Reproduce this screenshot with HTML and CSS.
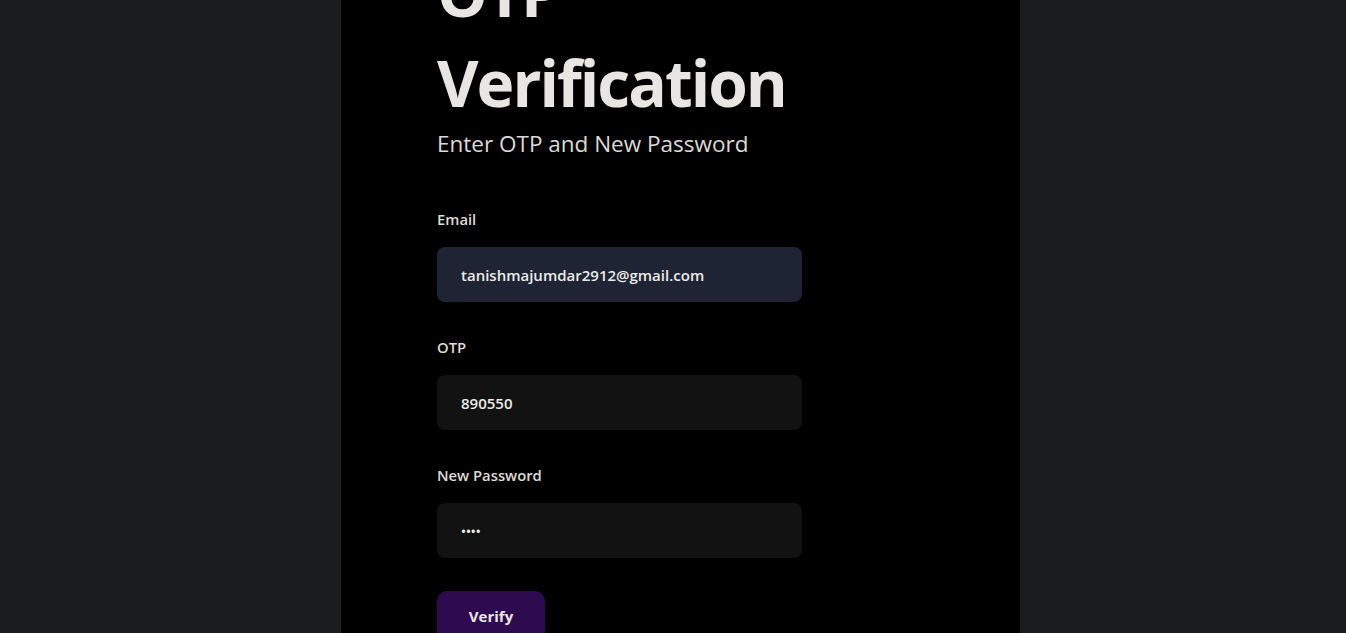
FILE: index.html
```html
<!DOCTYPE html>
<html lang="en">
<head>
<meta charset="utf-8">
<title>OTP Verification</title>
<link rel="stylesheet" href="styles.css">
</head>
<body>
<div class="page">
  <main class="panel">
    <h1 class="title">OTP Verification</h1>
    <p class="subtitle">Enter OTP and New Password</p>
    <form class="form">
      <div class="field">
        <label class="label" for="email">Email</label>
        <input class="input input-email" id="email" type="email" value="tanishmajumdar2912@gmail.com">
      </div>
      <div class="field">
        <label class="label" for="otp">OTP</label>
        <input class="input" id="otp" type="text" value="890550">
      </div>
      <div class="field">
        <label class="label" for="pw">New Password</label>
        <input class="input input-pw" id="pw" type="password" value="abcd">
      </div>
      <button class="btn" type="button">Verify</button>
    </form>
  </main>
</div>
</body>
</html>
```
FILE: styles.css
```css
html, body {
  margin: 0;
  padding: 0;
  height: 100%;
  overflow: hidden;
}
body {
  background: #1b1c1e;
  font-family: "Open Sans", "Noto Sans", sans-serif;
  color: #e8e6e3;
}
.page {
  display: flex;
  min-height: 633px;
}
.panel {
  margin-left: 341px;
  width: 679px;
  box-sizing: border-box;
  background: #000;
  padding: 0 96px 40px;
  min-height: 633px;
}
.title {
  margin: -52px 0 0;
  max-width: 380px;
  font-size: 64px;
  line-height: 90px;
  font-weight: 700;
  letter-spacing: -2px;
  color: #e8e6e3;
}
.subtitle {
  margin: 0;
  font-size: 22.5px;
  line-height: 32px;
  color: #dcdad6;
}
.form {
  display: flex;
  flex-direction: column;
  align-items: flex-start;
  gap: 35px;
  margin-top: 49px;
}
.field {
  display: flex;
  flex-direction: column;
  width: 365px;
}
.label {
  font-size: 14.8px;
  line-height: 20px;
  font-weight: 600;
  color: #dedbd7;
  margin-bottom: 18px;
}
.input {
  box-sizing: border-box;
  width: 365px;
  height: 55px;
  border: none;
  outline: none;
  border-radius: 8px;
  background: #121212;
  color: #ecebe8;
  font-family: inherit;
  font-size: 15px;
  font-weight: 600;
  padding: 0 24px;
}
.input-email {
  background: #1e2433;
}
.input-pw {
  font-size: 13px;
  letter-spacing: 0;
}
.btn {
  margin-top: -2px;
  width: 108px;
  height: 50px;
  border: none;
  border-radius: 10px;
  background: #2e0b4f;
  color: #e8e6e3;
  font-family: inherit;
  font-size: 15px;
  font-weight: 700;
  padding: 0;
}
```
